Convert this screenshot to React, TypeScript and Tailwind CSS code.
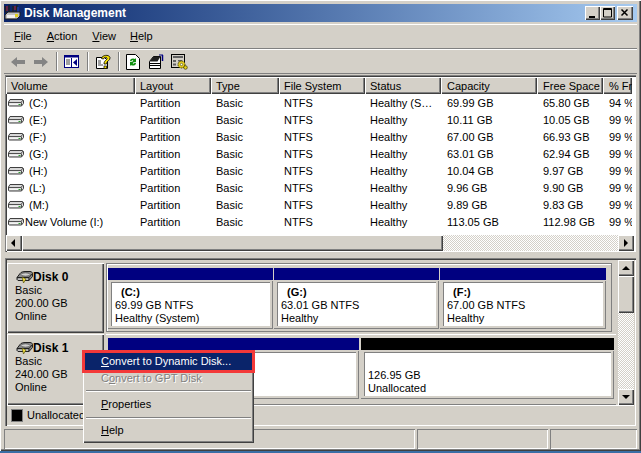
import React from "react";

const raised = "shadow-[inset_1px_1px_0_#ffffff,inset_-1px_-1px_0_#404040,inset_-2px_-2px_0_#808080]";
const sunken = "shadow-[inset_1px_1px_0_#808080,inset_-1px_-1px_0_#ffffff]";
const deep = "shadow-[inset_1px_1px_0_#808080,inset_2px_2px_0_#404040,inset_-1px_-1px_0_#ffffff]";

const cols = [129, 76, 68, 86, 76, 96, 66, 29];
const headers = ["Volume", "Layout", "Type", "File System", "Status", "Capacity", "Free Space", "% Fr"];
const rows = [
  ["(C:)", "Healthy (S…", "69.99 GB", "65.80 GB", "94 %"],
  ["(E:)", "Healthy", "10.11 GB", "10.05 GB", "99 %"],
  ["(F:)", "Healthy", "67.00 GB", "66.93 GB", "99 %"],
  ["(G:)", "Healthy", "63.01 GB", "62.94 GB", "99 %"],
  ["(H:)", "Healthy", "10.04 GB", "9.97 GB", "99 %"],
  ["(L:)", "Healthy", "9.96 GB", "9.90 GB", "99 %"],
  ["(M:)", "Healthy", "9.89 GB", "9.83 GB", "99 %"],
  ["New Volume (I:)", "Healthy", "113.05 GB", "112.98 GB", "99 %"],
];

function Drive() {
  return (
    <svg width="16" height="9" viewBox="0 0 16 9" className="shrink-0">
      <path d="M2 .5h12.500l1 1v3l-2 2.500H1.500L.5 6.500V3z" fill="#d8d8d8" stroke="#404040" />
      <path d="M1 3.500h12l2-2.500" fill="none" stroke="#505050" />
      <path d="M1.500 4.500h11v1.500h-11z" fill="#f4f4f4" />
      <path d="M13.500 3.500v3.500" stroke="#505050" />
      <rect x="10.500" y="5" width="2" height="1" fill="#30a030" />
    </svg>
  );
}

function DiskIcon() {
  return (
    <svg width="17" height="13" viewBox="0 0 17 13" className="shrink-0">
      <path d="M1 6.500l3-4C5 1 7 .5 10 .5h4c1.500 0 2.500 1 2.500 2v3l-3.500 4H2L1 8.500z" fill="#8c8c8c" stroke="#202020" />
      <path d="M1 6.500h12v3M13 6.500l3.500-4" fill="none" stroke="#202020" />
      <ellipse cx="9.500" cy="3.500" rx="4.500" ry="1.700" fill="#d0d0d0" stroke="#404040" strokeWidth="0.700" />
      <path d="M2 7.500h10v1.500H2z" fill="#c0c0c0" />
      <path d="M6 6l1.500 6 2.500-4z" fill="#f4e040" stroke="#404000" strokeWidth="0.600" />
    </svg>
  );
}

function AppIcon() {
  return (
    <svg width="17" height="16" viewBox="0 0 17 16" className="shrink-0">
      <path d="M1 1l1 7M5 0v7M9 1v6M13 0l-1 7" stroke="#202020" strokeWidth="1.400" />
      <path d="M3 1v5M11 1v4" stroke="#c02020" strokeWidth="1" />
      <path d="M14 2v5" stroke="#2040c0" strokeWidth="1" />
      <path d="M1 10l3-3h12v4l-3 3H1z" fill="#c0c0c0" stroke="#202020" />
      <rect x="3" y="10" width="8" height="3" fill="#f0f0f0" />
      <rect x="11" y="9" width="3" height="3" fill="#e0d020" />
    </svg>
  );
}

function Arrow({ dir }: { dir: "l" | "r" }) {
  return (
    <svg width="14" height="12" viewBox="0 0 14 12" className="shrink-0">
      <path d={dir === "l" ? "M0 6l6-5v3h8v4H6v3z" : "M14 6L8 1v3H0v4h8v3z"} fill="#848484" />
    </svg>
  );
}

function Sep() {
  return <div className="w-[2px] h-[19px] bg-[#808080] border-r border-white shrink-0" />;
}

function Toolbar() {
  return (
    <div className="h-[24px] flex items-center pl-[7px] border-b border-[#808080]">
      <Arrow dir="l" />
      <div className="ml-[9px]"><Arrow dir="r" /></div>
      <div className="ml-[8px]"><Sep /></div>
      <svg width="15" height="13" viewBox="0 0 15 13" className="ml-[6px] shrink-0">
        <rect x="0.500" y="0.500" width="14" height="12" fill="#ffffff" stroke="#000080" />
        <rect x="0.500" y="0.500" width="14" height="2" fill="#000080" />
        <path d="M7.500 3v9" stroke="#000080" />
        <path d="M2 5h4M2 7h4M2 9h4" stroke="#404040" />
        <path d="M13 4v7l-4-3.500z" fill="#000080" />
      </svg>
      <div className="ml-[8px]"><Sep /></div>
      <svg width="17" height="16" viewBox="0 0 17 16" className="ml-[6px] shrink-0">
        <path d="M1.500 3.500h8l3 3v8h-11z" fill="#ffffff" stroke="#000000" />
        <path d="M3 7h3M3 9h3M3 11h5" stroke="#404040" />
        <path d="M6.500 4.500C7 1 14 0 15 3.500c.7 3-3.500 3-3.500 6.500h-2.500c0-4 3.500-4 3-6-.4-1.200-3-1-3.500 1z" fill="#f6e000" stroke="#000000" strokeWidth="0.800" />
        <rect x="9" y="12" width="2.500" height="2.500" fill="#f6e000" stroke="#000000" strokeWidth="0.700" />
      </svg>
      <div className="ml-[6px]"><Sep /></div>
      <svg width="14" height="16" viewBox="0 0 14 16" className="ml-[6px] shrink-0">
        <path d="M.5.5h9l4 4v11H.5z" fill="#ffffff" stroke="#000000" />
        <path d="M4 7c0-3 4-3 5-2l1-1v4H6l1.300-1.300C6.500 6 5.500 6.500 5.500 7.500z" fill="#109010" />
        <path d="M10 9c0 3-4 3-5 2l-1 1V8h4l-1.300 1.300c.8.700 1.800.200 1.800-.8z" fill="#109010" />
      </svg>
      <svg width="17" height="16" viewBox="0 0 17 16" className="ml-[8px] shrink-0">
        <path d="M1.500 7.500l4-5h7v12h-11z" fill="#ffffff" stroke="#000000" />
        <path d="M1.500 7.500l4-5h7l-3 5z" fill="#202020" />
        <path d="M2 9.500h10M2 11.500h10" stroke="#000000" />
        <path d="M14.500 1v6" stroke="#000080" strokeWidth="1.500" />
        <path d="M11 1h4" stroke="#000080" />
      </svg>
      <svg width="17" height="16" viewBox="0 0 17 16" className="ml-[6px] shrink-0">
        <rect x="0.500" y="0.500" width="13" height="13" fill="#d4d0c8" stroke="#000000" />
        <rect x="2" y="2" width="10" height="2" fill="#606060" />
        <path d="M2 6h3v2H2zM2 9.500h3v2H2zM7 6h4v1.500H7z" fill="#606060" />
        <circle cx="10.500" cy="10.500" r="3.500" fill="#e8d020" stroke="#404000" strokeDasharray="1.500 0.800" />
        <circle cx="10.500" cy="10.500" r="1.200" fill="#ffffff" stroke="#404000" strokeWidth="0.600" />
        <circle cx="14.500" cy="13.500" r="1.800" fill="#e8d020" stroke="#404000" strokeWidth="0.700" />
      </svg>
    </div>
  );
}

function Tri({ dir }: { dir: "l" | "r" | "u" | "d" }) {
  const d = { l: "M5 0v8L1 4z", r: "M2 0v8l4-4z", u: "M0 6h8L4 2z", d: "M0 2h8L4 6z" }[dir];
  return (
    <svg width="8" height="8" viewBox="0 0 8 8">
      <path d={d} fill="#000000" />
    </svg>
  );
}

function ScrollBtn({ dir }: { dir: "l" | "r" | "u" | "d" }) {
  return (
    <div className={`w-[16px] h-[16px] shrink-0 bg-[#d4d0c8] flex items-center justify-center ${raised}`}>
      <Tri dir={dir} />
    </div>
  );
}

const dither = "bg-[repeating-conic-gradient(#d4d0c8_0_25%,#ffffff_0_50%)] bg-[length:2px_2px]";

function VolumeList() {
  const pad = (i: number) => (i >= 5 ? "pl-[6px]" : "pl-[5px]");
  return (
    <div className={`h-[177px] mt-[1px] mx-[1px] pl-[1px] pr-[2px] pt-[2px] pb-[1px] bg-white flex flex-col ${deep}`}>
      <div className="flex h-[18px] shrink-0 overflow-hidden">
        {headers.map((h, i) => (
          <div
            key={h}
            style={{ width: cols[i] }}
            className={`shrink-0 h-[17px] bg-[#d4d0c8] ${pad(i)} pt-[1px] flex items-center whitespace-nowrap overflow-hidden ${raised}`}
          >
            {h}
          </div>
        ))}
      </div>
      <div className="flex-1 flex flex-col">
        {rows.map((r) => (
          <div key={r[0]} className="flex h-[17px] items-center shrink-0">
            <div style={{ width: cols[0] }} className="flex items-center gap-[1px] pl-[2px] shrink-0">
              <Drive />
              <span className={r[0].length > 5 ? "" : "pl-[4px]"}>{r[0]}</span>
            </div>
            <div style={{ width: cols[1] }} className="pl-[5px] shrink-0">Partition</div>
            <div style={{ width: cols[2] }} className="pl-[5px] shrink-0">Basic</div>
            <div style={{ width: cols[3] }} className="pl-[5px] shrink-0">NTFS</div>
            <div style={{ width: cols[4] }} className="pl-[5px] shrink-0">{r[1]}</div>
            <div style={{ width: cols[5] }} className="pl-[6px] shrink-0">{r[2]}</div>
            <div style={{ width: cols[6] }} className="pl-[6px] shrink-0">{r[3]}</div>
            <div style={{ width: cols[7] }} className="pl-[6px] shrink-0 whitespace-nowrap overflow-hidden">{r[4]}</div>
          </div>
        ))}
      </div>
      <div className="h-[16px] flex shrink-0">
        <ScrollBtn dir="l" />
        <div className={`flex-1 flex ${dither}`}>
          <div className={`w-[421px] bg-[#d4d0c8] ${raised}`} />
        </div>
        <ScrollBtn dir="r" />
      </div>
    </div>
  );
}

function Partition({
  width,
  bar,
  title,
  l1,
  l2,
}: {
  width: number;
  bar: string;
  title?: string;
  l1: string;
  l2: string;
}) {
  return (
    <div style={{ width }} className="shrink-0 flex flex-col">
      <div className={`h-[12px] ${bar} shrink-0`} />
      <div className="h-[48px] mt-[1px] bg-[#d4d0c8] border-b border-r border-[#808080] pl-[3px] pt-[1px] pb-[2px] pr-[2px]">
        <div className="h-full bg-white border-t border-l border-[#808080] pl-[3px] leading-[13px] flex flex-col justify-end pb-[1px]">
          {title && <div className="font-bold pl-[6px]">{title}</div>}
          <div>{l1}</div>
          <div>{l2}</div>
        </div>
      </div>
    </div>
  );
}

function DiskLabel({ name, size, h }: { name: string; size: string; h: number }) {
  return (
    <div style={{ height: h }} className={`w-[97px] shrink-0 bg-[#d4d0c8] pl-[8px] pt-[6px] leading-[13px] ${raised}`}>
      <div className="flex items-end pl-[1px] h-[15px]">
        <DiskIcon />
        <span className="font-bold text-[12px]">{name}</span>
      </div>
      <div>Basic</div>
      <div>{size}</div>
      <div>Online</div>
    </div>
  );
}

function GraphView() {
  return (
    <div className={`mx-[1px] mt-[6px] h-[168px] flex flex-col pt-[2px] pl-[2px] pr-[2px] pb-[2px] ${deep}`}>
      <div className="flex h-[145px] shrink-0">
        <div className="flex-1 flex flex-col pt-[3px] overflow-hidden">
          <div className="flex h-[71px] shrink-0">
            <DiskLabel name="Disk 0" size="200.00 GB" h={70} />
            <div className="ml-[2px] w-[506px] h-[69px] pl-[1px] pt-[4px] border border-[#808080] shadow-[inset_1px_1px_0_#ffffff]">
              <div className="flex gap-[1px]">
                <Partition width={165} bar="bg-[#000080]" title="(C:)" l1="69.99 GB NTFS" l2="Healthy (System)" />
                <Partition width={165} bar="bg-[#000080]" title="(G:)" l1="63.01 GB NTFS" l2="Healthy" />
                <Partition width={166} bar="bg-[#000080]" title="(F:)" l1="67.00 GB NTFS" l2="Healthy" />
              </div>
            </div>
          </div>
          <div className="flex flex-1">
            <DiskLabel name="Disk 1" size="240.00 GB" h={71} />
            <div className="ml-[2px] w-[510px] h-[71px] pl-[2px] pt-[3px] border-t border-white border-b border-b-[#808080]">
              <div className="flex gap-[2px]">
                <Partition width={251} bar="bg-[#000080]" l1="" l2="" />
                <Partition width={253} bar="bg-black" l1="126.95 GB" l2="Unallocated" />
              </div>
            </div>
          </div>
        </div>
        <div className={`w-[16px] shrink-0 flex flex-col ${dither}`}>
          <ScrollBtn dir="u" />
          <div className={`h-[37px] bg-[#d4d0c8] shrink-0 ${raised}`} />
          <div className="flex-1" />
          <ScrollBtn dir="d" />
        </div>
      </div>
      <div className="flex-1 flex items-center pl-[4px] pt-[1px] border-t border-white">
        <div className="w-[12px] h-[13px] bg-black border border-[#808080] shrink-0" />
        <span className="ml-[4px]">Unallocated</span>
      </div>
    </div>
  );
}

function MenuItem({ children, disabled }: { children: React.ReactNode; disabled?: boolean }) {
  return (
    <div className={`h-[17px] pl-[16px] flex items-center whitespace-pre ${disabled ? "text-[#808080] [text-shadow:1px_1px_0_#ffffff]" : ""}`}>
      {children}
    </div>
  );
}

export default function App() {
  return (
    <div
      className="relative w-[641px] h-[453px] overflow-hidden bg-[#3a6ea5] text-[11px] text-black"
      style={{ fontFamily: '"Liberation Sans", Arial, sans-serif' }}
    >
      <div className="h-[451px] bg-[#d4d0c8] p-[4px] pb-[2px] flex flex-col shadow-[inset_1px_1px_0_#ffffff,inset_-1px_-1px_0_#404040,inset_-2px_-2px_0_#808080]">
        <div className="h-[18px] shrink-0 bg-gradient-to-r from-[#0a246a] to-[#a6caf0] flex items-center pr-[4px]">
          <AppIcon />
          <span className="text-white font-bold text-[12px] ml-[3px] flex-1">Disk Management</span>
          <div className="flex">
            <div className={`w-[15px] h-[14px] bg-[#d4d0c8] flex items-center justify-center ${raised}`}>
              <svg width="10" height="10" viewBox="0 0 10 10"><path d="M1 8h6v2H1z" fill="#000" /></svg>
            </div>
            <div className={`w-[15px] h-[14px] bg-[#d4d0c8] flex items-center justify-center ${raised}`}>
              <svg width="10" height="10" viewBox="0 0 10 10"><path d="M.5.500h8v8.500h-8zM0 1.500h9" fill="none" stroke="#000" /></svg>
            </div>
            <div className={`w-[16px] h-[14px] ml-[2px] bg-[#d4d0c8] flex items-center justify-center ${raised}`}>
              <svg width="10" height="10" viewBox="0 0 10 10"><path d="M1.500 1.500l6 6M7.500 1.500l-6 6" fill="none" stroke="#000" strokeWidth="1.500" /></svg>
            </div>
          </div>
        </div>
        <div className="h-[25px] mt-[2px] shrink-0 flex items-center border-t border-white border-b border-b-[#808080]">
          <span className="ml-[10px]"><u>F</u>ile</span>
          <span className="ml-[15px]"><u>A</u>ction</span>
          <span className="ml-[15px]"><u>V</u>iew</span>
          <span className="ml-[14px]"><u>H</u>elp</span>
        </div>
        <div className="border-t border-white shrink-0">
          <Toolbar />
        </div>
        <VolumeList />
        <GraphView />
        <div className="flex h-[20px] mt-[3px] gap-[2px] shrink-0">
          <div className={`w-[411px] ${sunken}`} />
          <div className={`w-[131px] ${sunken}`} />
          <div className={`flex-1 ${sunken}`} />
        </div>
      </div>

      <div className="absolute left-[83px] top-[350px] w-[171px] h-[93px] bg-[#d4d0c8] p-[2px] pt-0 shadow-[inset_1px_1px_0_#ffffff,inset_-1px_-1px_0_#404040,inset_-2px_-2px_0_#808080]">
        <div className="mx-[-3px] h-[23px] border-[3px] border-[#f33939] bg-[#0a246a] text-white pl-[16px] flex items-center whitespace-pre relative">
          <span><u>C</u>onvert to Dynamic Disk...</span>
        </div>
        <div className="mt-[-3px]">
          <MenuItem disabled>C<u>o</u>nvert to GPT Disk</MenuItem>
        </div>
        <div className="h-[2px] mx-[1px] mt-[3px] mb-[4px] bg-[#808080] border-b border-white" />
        <MenuItem><u>P</u>roperties</MenuItem>
        <div className="h-[2px] mx-[1px] mt-[4px] mb-[3px] bg-[#808080] border-b border-white" />
        <MenuItem><u>H</u>elp</MenuItem>
      </div>
    </div>
  );
}
